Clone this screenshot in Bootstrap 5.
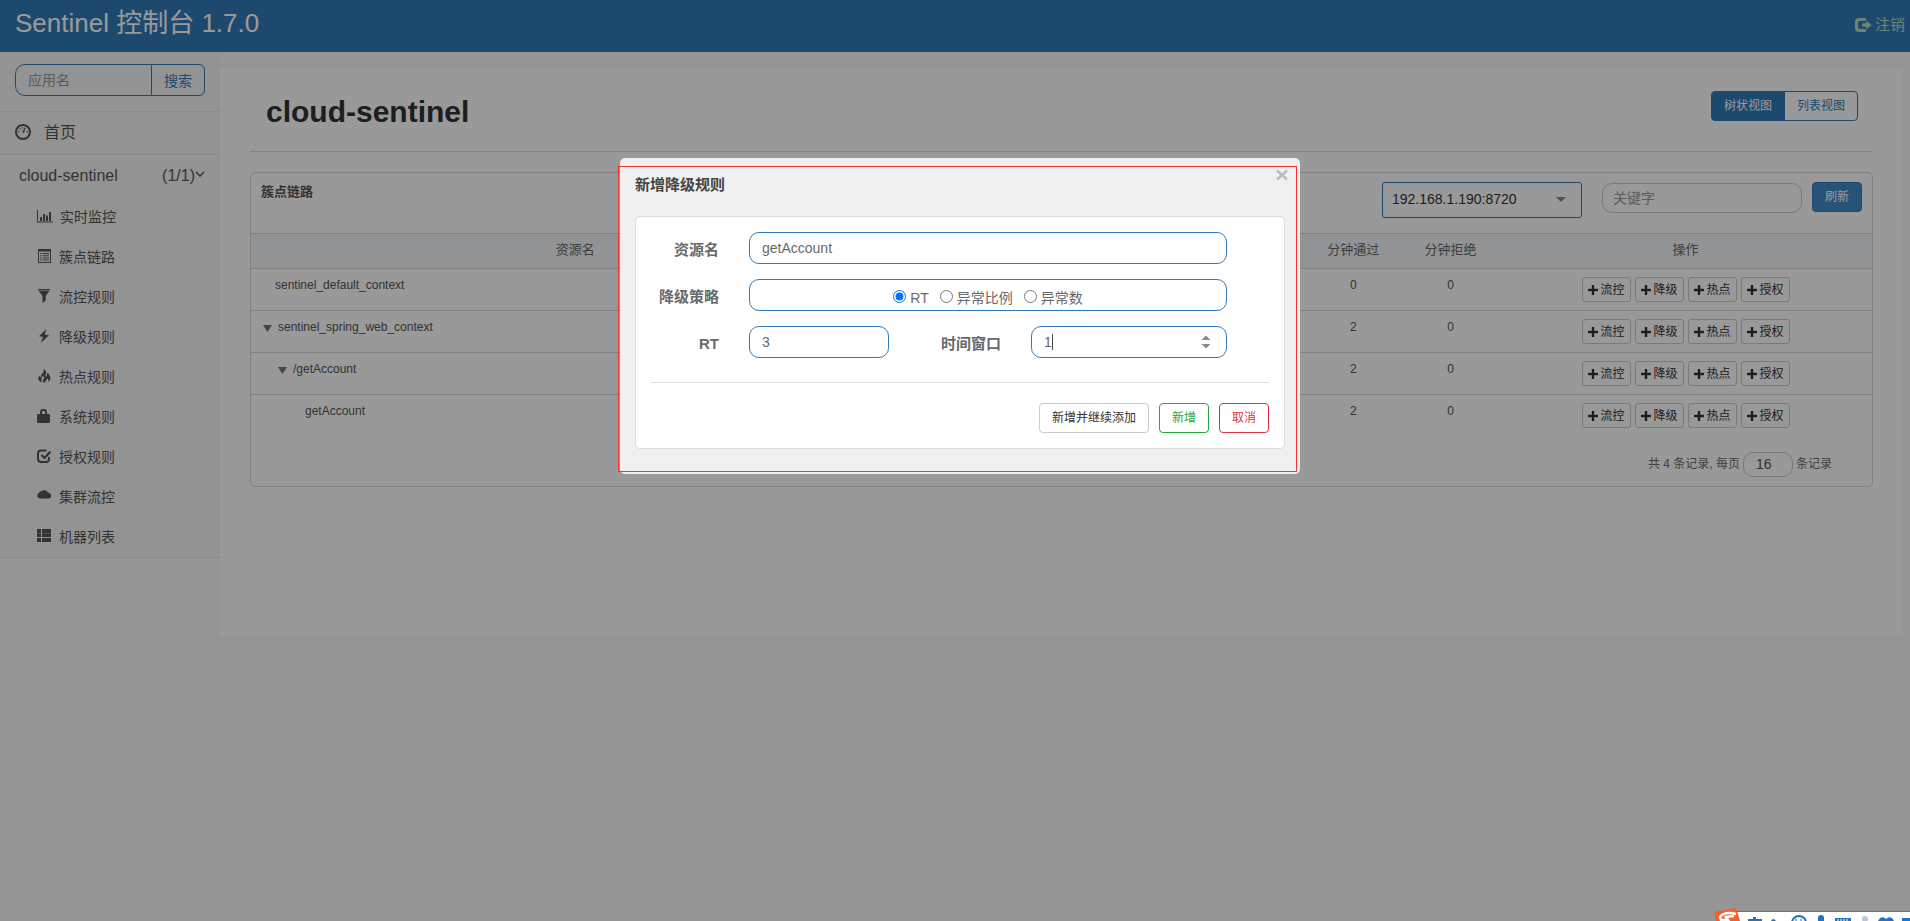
<!DOCTYPE html>
<html lang="zh-CN">
<head>
<meta charset="utf-8">
<meta name="viewport" content="width=device-width, initial-scale=1">
<title>Sentinel 控制台</title>
<link href="https://cdn.jsdelivr.net/npm/bootstrap@5.3.0/dist/css/bootstrap.min.css" rel="stylesheet">
<style>
  :root { --brand: #337ab7; --ink: #676a6c; --line: #dddddd; }
  body { font-family: "Liberation Sans", "Noto Sans CJK SC", sans-serif; font-size: 14px; line-height: 20px; color: #555; background: #f8f8f8; overflow: hidden; }
  svg { fill: currentColor; flex: none; }
  .topbar { background: var(--brand); height: 52px; padding: 0 5px 0 15px; }
  .brand-name { font-size: 26px; line-height: 46px; color: #fff; }
  .logout { color: #b4dcc4; font-size: 15px; margin-top: 15px; line-height: 20px; gap: 3px; }
  .side { width: 220px; background: #f5f5f5; font-size: 14px; }
  .side a { color: #555; }
  .side-search { padding: 12px 15px 15px; border-bottom: 1px solid #e7e7e7; }
  .side-search .form-control { border-color: var(--brand); border-radius: 10px 0 0 10px; height: 32px; font-size: 14px; padding: 4px 12px; background: transparent; }
  .side-search .btn { border-color: var(--brand); color: var(--brand); font-size: 14px; line-height: 20px; height: 32px; width: 54px; padding: 5px 0 3px; }
  .form-control::placeholder { color: #999; opacity: 1; }
  .side-home { height: 43px; padding: 0 15px; gap: 13px; font-size: 16px; border-bottom: 1px solid #e7e7e7; }
  .side-home svg { margin-bottom: 2px; }
  .side-app { height: 42px; padding: 0 15px 0 19px; font-size: 16px; }
  .side-app svg { margin-bottom: 4px; }
  .side-list { border-bottom: 1px solid #e7e7e7; }
  .side-list a { height: 40px; padding-left: 37px; gap: 8px; font-size: 14px; }
  .side-list svg { width: 14px; height: 14px; margin-bottom: 2px; }
  .side-list .icon-wide { width: 16px; margin-right: -1px; }
  .page-panel { background: #fff; margin: 17px 7px 0 0; padding: 0 30px 149px; }
  .page-head { height: 83px; padding: 0 15px 0 16px; border-bottom: 1px solid var(--line); margin-bottom: 20px; }
  .page-head h1 { font-size: 30px; line-height: 36px; font-weight: 700; color: #333; margin: 25px 0 0; }
  .view-switch { margin-top: 22px; }
  .view-switch .btn { font-size: 12px; line-height: 18px; height: 30px; padding: 5px 12px; border-color: var(--brand); color: var(--brand); border-radius: 4px; }
  .view-switch .btn.active { background: var(--brand); border-color: var(--brand); color: #fff; }
  .panel-card { border: 1px solid #d6d6d6; border-radius: 5px; }
  .panel-top { height: 60px; padding: 9px 10px 0; }
  .panel-title { font-size: 13px; font-weight: 700; line-height: 20px; }
  .machine { width: 200px; margin-right: 20px; position: relative; }
  .machine .form-select { height: 36px; border-color: var(--brand); border-radius: 3px; font-size: 14px; padding: 0 9px 2px; color: #333; background: none; }
  .machine::after { content: ""; position: absolute; right: 16px; top: 15px; border: 5px solid transparent; border-top-color: #888; border-bottom: 0; }
  .keyword { width: 200px; height: 30px; margin: 1px 10px 0 0; border-radius: 10px; border-color: #ccc; font-size: 14px; padding: 4px 10px; }
  .btn-refresh { background: #428bca; border-color: var(--brand); color: #fff; font-size: 12px; line-height: 18px; width: 50px; height: 30px; padding: 4px 0; border-radius: 4px; }
  .chain { table-layout: fixed; margin: 0; color: #555; font-size: 12px; line-height: 16px; --bs-table-color: #555; }
  .chain > thead > tr > th { background: #f3f5f7; border-top: 1px solid #d6d6d6; border-bottom: 1px solid #d6d6d6; font-size: 13px; font-weight: 400; height: 35px; padding: 0 0 2px; vertical-align: middle; text-align: center; color: #676a6c; }
  .chain > tbody > tr > td { height: 42px; padding: 8px 10px 0; border-bottom: 1px solid #d6d6d6; text-align: center; vertical-align: top; color: #555; }
  .chain > tbody > tr:last-child > td { border-bottom: 0; }
  .chain > tbody > tr > td:first-child { text-align: left; }
  .node { display: flex; align-items: center; gap: 6px; }
  .node svg { width: 9px; height: 7px; margin-top: 3px; color: #777; }
  .leaf-1 { padding-left: 14px; } .node-1 { padding-left: 2px; } .node-2 { padding-left: 17px; } .leaf-3 { padding-left: 44px; }
  .btn-op { font-size: 12px; line-height: 18px; height: 25px; padding: 2px 5px; border: 1px solid #ccc; border-radius: 3px; color: #333; display: inline-flex; align-items: center; gap: 3px; }
  .pager { height: 49px; padding: 15px 40px 0 0; font-size: 12px; line-height: 24px; color: #676a6c; gap: 3px; }
  .pager .form-control { width: 50px; height: 25px; border-radius: 10px; border-color: #ccc; font-size: 14px; padding: 0 12px; color: #555; }
  .shade { background: rgba(0, 0, 0, .4); padding: 158px 0 0 10px; }
  .dlg { width: 680px; max-width: 96%; margin: 0 auto; background: #f0f0f0; border-radius: 5px; padding: 17px 15px 25px; position: relative; }
  .dlg-outline { position: absolute; inset: 8px 3px 2px -2px; border: 1px solid #ff3030; pointer-events: none; }
  .dlg-close { position: absolute; right: 12px; top: 11px; border: 0; background: none; padding: 0; color: #bbb; display: flex; }
  .dlg h2 { font-size: 15px; line-height: 20px; font-weight: 700; color: #444; margin: 0 0 21px; }
  .dlg-card { background: #fff; border: 1px solid #dcdcdc; border-radius: 5px; padding: 15px; color: var(--ink); }
  .dlg-row { margin-bottom: 15px; }
  .dlg-label { width: 68px; margin-right: 30px; text-align: right; font-size: 15px; font-weight: 700; line-height: 20px; padding-top: 8px; white-space: nowrap; }
  .dlg-card .form-control { border: 1px solid var(--brand); border-radius: 10px; height: 32px; font-size: 14px; padding: 4px 12px; color: var(--ink); }
  .wide { width: 478px; } .short { width: 140px; margin-right: 44px; } .mid { width: 196px; position: relative; }
  .mid .dlg-caret { position: absolute; left: 21px; top: 8px; width: 1px; height: 16px; background: #444; }
  .mid input::-webkit-inner-spin-button { opacity: 1; height: 17px; }
  .choice { gap: 11px; padding-top: 8px !important; }
  .choice label { gap: 4px; line-height: 20px; display: flex; }
  .choice input { width: 13px; height: 13px; margin: 2px 0 0; accent-color: #0075ff; }
  .dlg-card hr { margin: 24px 0 20px; opacity: 1; border-top: 1px solid #e0e0e0; }
  .dlg-actions { gap: 10px; }
  .dlg-actions .btn { font-size: 12px; line-height: 18px; height: 30px; padding: 5px 12px; border-radius: 4px; background: #fff; }
  .act-more { border-color: #ccc; color: #333; } .act-add { border-color: #28a745; color: #28a745; } .act-cancel { border-color: #dc3545; color: #dc3545; }
  .ime { position: fixed; right: 0; bottom: 0; z-index: 2000; display: block; }
</style>
</head>
<body>
<header class="topbar d-flex justify-content-between">
  <span class="brand-name">Sentinel 控制台 1.7.0</span>
  <a href="#" class="logout d-flex align-items-center align-self-start text-decoration-none">
    <svg width="17" height="14" viewBox="0 0 17 14"><path d="M11 0H4Q0 0 0 4v6q0 4 4 4h7v-3H5q-2 0-2-2V5q0-2 2-2h6z"/><path d="M11 2l6 5-6 5V9H7V5h4z" stroke="#337ab7" stroke-width=".6"/></svg>注销</a>
</header>
<div class="d-flex align-items-start">
  <nav class="side flex-shrink-0">
    <form class="side-search"><div class="input-group flex-nowrap">
      <input class="form-control" type="text" placeholder="应用名" aria-label="应用名"><button class="btn" type="button">搜索</button>
    </div></form>
    <a href="#" class="side-home d-flex align-items-center text-decoration-none">
      <svg width="16" height="16" viewBox="0 0 16 16"><circle cx="8" cy="8" r="7" fill="none" stroke="currentColor" stroke-width="2"/><path d="M7.300 8L9.600 3.600l.8.5L9 9.200zM3 7h1.500v1.200H3zM11.600 7h1.500v1.200h-1.500zM4.500 4.200h1.300v1.200H4.500zM7 3h1v1.400H7z"/></svg>首页</a>
    <a href="#" class="side-app d-flex align-items-center text-decoration-none">cloud-sentinel<span class="ms-auto">(1/1)</span>
      <svg width="10" height="10" viewBox="0 0 10 10"><path d="M1 3l4 4 4-4" fill="none" stroke="currentColor" stroke-width="1.400"/></svg></a>
    <div class="side-list">
      <a href="#" class="d-flex align-items-center text-decoration-none"><svg class="icon-wide" viewBox="0 0 16 14"><path d="M0 1h1v11.500h15v1H0zM3 8h2v4H3zM6 5h2v7H6zM9 6.500h2V12H9zM12 3h2v9h-2z"/></svg>实时监控</a>
      <a href="#" class="d-flex align-items-center text-decoration-none"><svg viewBox="0 0 14 14"><path fill-rule="evenodd" d="M1 0h13v14H1zM2 2.500V13h11V2.500zM3 4h1.500v1H3zM5.500 4H12v1H5.500zM3 6.200h1.500v1H3zM5.500 6.200H12v1H5.500zM3 8.400h1.500v1H3zM5.500 8.400H12v1H5.500zM3 10.600h1.500v1H3zM5.500 10.600H12v1H5.500z"/></svg>簇点链路</a>
      <a href="#" class="d-flex align-items-center text-decoration-none"><svg viewBox="0 0 14 14"><path d="M1 0h12v1L8.700 7v4.500L5.500 14V7L1 1z"/><path d="M1.500 1.500h11" stroke="#f5f5f5" stroke-width=".5"/></svg>流控规则</a>
      <a href="#" class="d-flex align-items-center text-decoration-none"><svg viewBox="0 0 14 14"><path d="M9.500 0L2 7.300l4 .7-2.200 6L12 6.200 7.700 5.600z"/></svg>降级规则</a>
      <a href="#" class="d-flex align-items-center text-decoration-none"><svg viewBox="0 0 14 14"><path d="M6.300 0C11 2 8.600 5 8.400 6.500c0 1.200 1.300 1.300 1.500 0 .2-1-.2-1.900-.1-2.700C13.500 5.600 15 10.500 11 13.300c.8-2 .4-3.200-1-4.100.1 1.500-.6 1.900-1.300 2.500-.5.600-.6 1.400-.3 2.300-3.300-.4-3-3-1.300-4.700C8 8.200 6 7.800 6.200 6.200c-1.600 1.600-2.400 4.300-1.200 7.400C.8 12 .5 8.500 2.500 6.400c.3 1.100.6 1.700 1.300 2C3.500 4.700 8 4 6.300 0z"/></svg>热点规则</a>
      <a href="#" class="d-flex align-items-center text-decoration-none"><svg viewBox="0 0 14 14"><path fill-rule="evenodd" d="M0 6q0-1 1-1h2V3q0-3 3-3h1q3 0 3 3v2h2q1 0 1 1v7q0 1-1 1H1q-1 0-1-1zM5 5h3V3q0-1-1-1H6Q5 2 5 3z"/></svg>系统规则</a>
      <a href="#" class="d-flex align-items-center text-decoration-none"><svg viewBox="0 0 14 14"><path d="M9.500 1.500H4Q1 1.500 1 4.500v5.500q0 3 3 3h5q3 0 3-3V8" fill="none" stroke="currentColor" stroke-width="2"/><path d="M4.500 6l3 3 6-6.500" fill="none" stroke="currentColor" stroke-width="2.200"/></svg>授权规则</a>
      <a href="#" class="d-flex align-items-center text-decoration-none"><svg viewBox="0 0 14 14"><path d="M3 9.500a3 3 0 0 1-.9-5.700A2 2 0 0 1 4.500 2.300 4 4 0 0 1 11 3.700a2.900 2.900 0 0 1 .5 5.800z"/></svg>集群流控</a>
      <a href="#" class="d-flex align-items-center text-decoration-none"><svg viewBox="0 0 14 14"><path d="M0 0h4v8H0zM5 0h9v8H5zM0 9h4v4H0zM5 9h9v4H5z"/><path d="M0 4.500h14" stroke="#f5f5f5" stroke-width=".3"/></svg>机器列表</a>
    </div>
  </nav>
  <main class="page-panel flex-grow-1">
    <div class="page-head d-flex justify-content-between align-items-start">
      <h1>cloud-sentinel</h1>
      <div class="view-switch btn-group"><button type="button" class="btn active">树状视图</button><button type="button" class="btn">列表视图</button></div>
    </div>
    <section class="panel-card">
      <div class="panel-top d-flex align-items-start">
        <span class="panel-title me-auto">簇点链路</span>
        <div class="machine"><select class="form-select" aria-label="机器"><option>192.168.1.190:8720</option></select></div>
        <input class="form-control keyword" type="text" placeholder="关键字" aria-label="关键字">
        <button type="button" class="btn btn-refresh">刷新</button>
      </div>
      <table class="table chain">
        <colgroup><col style="width:40%"><col style="width:25%"><col style="width:6%"><col style="width:6%"><col style="width:23%"></colgroup>
        <thead><tr><th>资源名</th><th></th><th>分钟通过</th><th>分钟拒绝</th><th>操作</th></tr></thead>
        <tbody id="rows"></tbody>
      </table>
      <div class="pager d-flex justify-content-end"><label for="size">共 4 条记录, 每页</label><input id="size" class="form-control" type="text" value="16"><span>条记录</span></div>
    </section>
  </main>
</div>

<div class="modal d-block shade" role="dialog" aria-labelledby="dlg-title">
  <div class="dlg">
    <h2 id="dlg-title">新增降级规则</h2>
    <button type="button" class="dlg-close" aria-label="关闭"><svg width="12" height="12" viewBox="0 0 12 12"><path d="M1 1.500l10 9M11 1.500l-10 9" stroke="currentColor" stroke-width="2.400"/></svg></button>
    <form class="dlg-card">
      <div class="dlg-row d-flex"><label class="dlg-label" for="res">资源名</label><input id="res" class="form-control wide" type="text" value="getAccount"></div>
      <div class="dlg-row d-flex"><span class="dlg-label">降级策略</span>
        <div class="form-control wide choice d-flex justify-content-center">
          <label><input type="radio" name="grade" checked>RT</label><label><input type="radio" name="grade">异常比例</label><label><input type="radio" name="grade">异常数</label>
        </div></div>
      <div class="dlg-row d-flex"><label class="dlg-label" for="rt">RT</label><div class="short"><input id="rt" class="form-control" type="text" value="3"></div>
        <label class="dlg-label" for="win">时间窗口</label><div class="mid"><input id="win" class="form-control" type="number" value="1"><i class="dlg-caret"></i></div></div>
      <hr>
      <div class="dlg-actions d-flex justify-content-end"><button type="button" class="btn act-more">新增并继续添加</button><button type="button" class="btn act-add">新增</button><button type="button" class="btn act-cancel">取消</button></div>
    </form>
    <div class="dlg-outline"></div>
  </div>
</div>

<svg class="ime" width="198" height="13" viewBox="0 0 198 13">
  <path d="M22 4h176v9H22z" fill="#fff"/><path d="M22 3.500h176" stroke="#667080"/>
  <path d="M2 4Q13 2 24 0l4 13H4z" fill="#f4602c"/><path d="M24 6Q12 3 8 9l1 3h7l-2-3 8-1" fill="none" stroke="#fff" stroke-width="2.500"/>
  <g fill="#1b74c8"><path d="M36 11h5V9h3v2h6v2H36z"/><path d="M59 13q2-4 5 0z"/><path d="M106 13v-3q0-3 3-3t3 3v3zM123 10h16v3h-16z"/><path d="M168 10q4-2 6 1 3-3 6-1l2 3h-16zM190 10h8v3h-8z"/></g>
  <circle cx="87" cy="15" r="7" fill="none" stroke="#1b74c8" stroke-width="2"/><path d="M84 11v2M89 11v2" stroke="#1b74c8"/>
  <path d="M125 12h12" stroke="#fff" stroke-dasharray="2 1"/><circle cx="153" cy="11" r="3" fill="#b9c5dd"/>
</svg>

<script>
  const nodes = [
    ['leaf-1', false, 'sentinel_default_context', 0, 0],
    ['node-1', true, 'sentinel_spring_web_context', 2, 0],
    ['node-2', true, '/getAccount', 2, 0],
    ['leaf-3', false, 'getAccount', 2, 0]
  ];
  const arrow = '<svg viewBox="0 0 9 7"><path d="M0 0h9L4.500 7z"/></svg>';
  const plus = '<svg width="10" height="10" viewBox="0 0 10 10"><path d="M4 0h2v4h4v2H6v4H4V6H0V4h4z" stroke="currentColor" stroke-width=".4"/></svg>';
  const ops = ['流控', '降级', '热点', '授权'].map(t => `<button type="button" class="btn btn-op">${plus}${t}</button>`).join('');
  document.getElementById('rows').innerHTML = nodes.map(([cls, open, name, pass, block]) =>
    `<tr><td><div class="node ${cls}">${open ? arrow : ''}${name}</div></td><td></td><td>${pass}</td><td>${block}</td><td><div class="d-flex justify-content-center gap-1">${ops}</div></td></tr>`).join('');
</script>
<script src="https://cdn.jsdelivr.net/npm/bootstrap@5.3.0/dist/js/bootstrap.bundle.min.js"></script>
</body>
</html>
